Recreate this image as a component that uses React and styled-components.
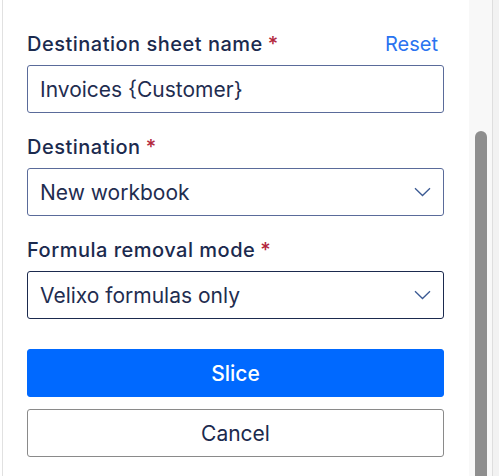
import React from "react";
import styled, { createGlobalStyle } from "styled-components";

const GlobalStyle = createGlobalStyle`
  html, body {
    margin: 0;
    padding: 0;
    background: #ffffff;
    font-family: Inter, "Noto Sans", sans-serif;
  }
`;

const Frame = styled.div`
  display: flex;
  width: 499px;
  height: 476px;
  overflow: hidden;
  background: #ffffff;
`;

const EdgeLine = styled.div`
  width: 1px;
  margin-left: 2px;
  background: #e1e1e1;
  flex-shrink: 0;
`;

const Panel = styled.div`
  flex: 1;
  display: flex;
  flex-direction: column;
  padding: 32px 25px 0 24px;
`;

const Field = styled.div`
  display: flex;
  flex-direction: column;
  gap: 9px;
  margin-bottom: 22px;
`;

const LabelRow = styled.div`
  display: flex;
  align-items: center;
  justify-content: space-between;
  height: 24px;
`;

const Label = styled.label`
  font-size: 20px;
  font-weight: 500;
  letter-spacing: 0.5px;
  color: #1b2a4e;
  line-height: 24px;
`;

const Required = styled.span`
  color: #b3263c;
  margin-left: 5px;
`;

const ResetLink = styled.a`
  font-size: 20px;
  color: #2a73f0;
  margin-right: 6px;
  cursor: pointer;
`;

const Box = styled.div`
  height: 48px;
  box-sizing: border-box;
  border: 1px solid ${({ $focused }) => ($focused ? "#1b2a4e" : "#5a6b9a")};
  border-radius: 3px;
  display: flex;
  align-items: center;
  justify-content: space-between;
  padding: 0 12px;
  font-size: 21px;
  color: #1f2d50;
`;

const Chevron = () => (
  <svg width="17" height="10" viewBox="0 0 17 10" fill="none">
    <path d="M1 1.2 L8.5 8.5 L16 1.2" stroke="#3b5a93" strokeWidth="1.3" />
  </svg>
);

const Actions = styled.div`
  display: flex;
  flex-direction: column;
  gap: 12px;
  margin-top: 8px;
`;

const Button = styled.button`
  height: 48px;
  border-radius: 3px;
  font-family: inherit;
  font-size: 21px;
  font-weight: ${({ $primary }) => ($primary ? 500 : 400)};
  background: ${({ $primary }) => ($primary ? "#0069ff" : "#ffffff")};
  color: ${({ $primary }) => ($primary ? "#ffffff" : "#1b2a4e")};
  border: 1px solid ${({ $primary }) => ($primary ? "#0069ff" : "#8a8a8a")};
  cursor: pointer;
`;

const ScrollTrack = styled.div`
  width: 23px;
  background: #f8f8f8;
  display: flex;
  justify-content: center;
  padding-top: 131px;
  box-sizing: border-box;
  flex-shrink: 0;
`;

const ScrollThumb = styled.div`
  width: 12px;
  background: #8e8e8e;
  border-radius: 6px 6px 0 0;
`;

const RightLine = styled.div`
  width: 1px;
  background: #dedede;
  flex-shrink: 0;
`;

const RightStrip = styled.div`
  width: 6px;
  background: #f2f2f2;
  flex-shrink: 0;
`;

const App = () => {
  return (
    <>
      <GlobalStyle />
      <Frame>
        <EdgeLine />
        <Panel>
          <Field>
            <LabelRow>
              <Label>
                Destination sheet name<Required>*</Required>
              </Label>
              <ResetLink>Reset</ResetLink>
            </LabelRow>
            <Box>Invoices {"{Customer}"}</Box>
          </Field>
          <Field>
            <LabelRow>
              <Label>
                Destination<Required>*</Required>
              </Label>
            </LabelRow>
            <Box>
              New workbook
              <Chevron />
            </Box>
          </Field>
          <Field>
            <LabelRow>
              <Label>
                Formula removal mode<Required>*</Required>
              </Label>
            </LabelRow>
            <Box $focused>
              Velixo formulas only
              <Chevron />
            </Box>
          </Field>
          <Actions>
            <Button $primary>Slice</Button>
            <Button>Cancel</Button>
          </Actions>
        </Panel>
        <ScrollTrack>
          <ScrollThumb />
        </ScrollTrack>
        <RightLine />
        <RightStrip />
      </Frame>
    </>
  );
};

export default App;
